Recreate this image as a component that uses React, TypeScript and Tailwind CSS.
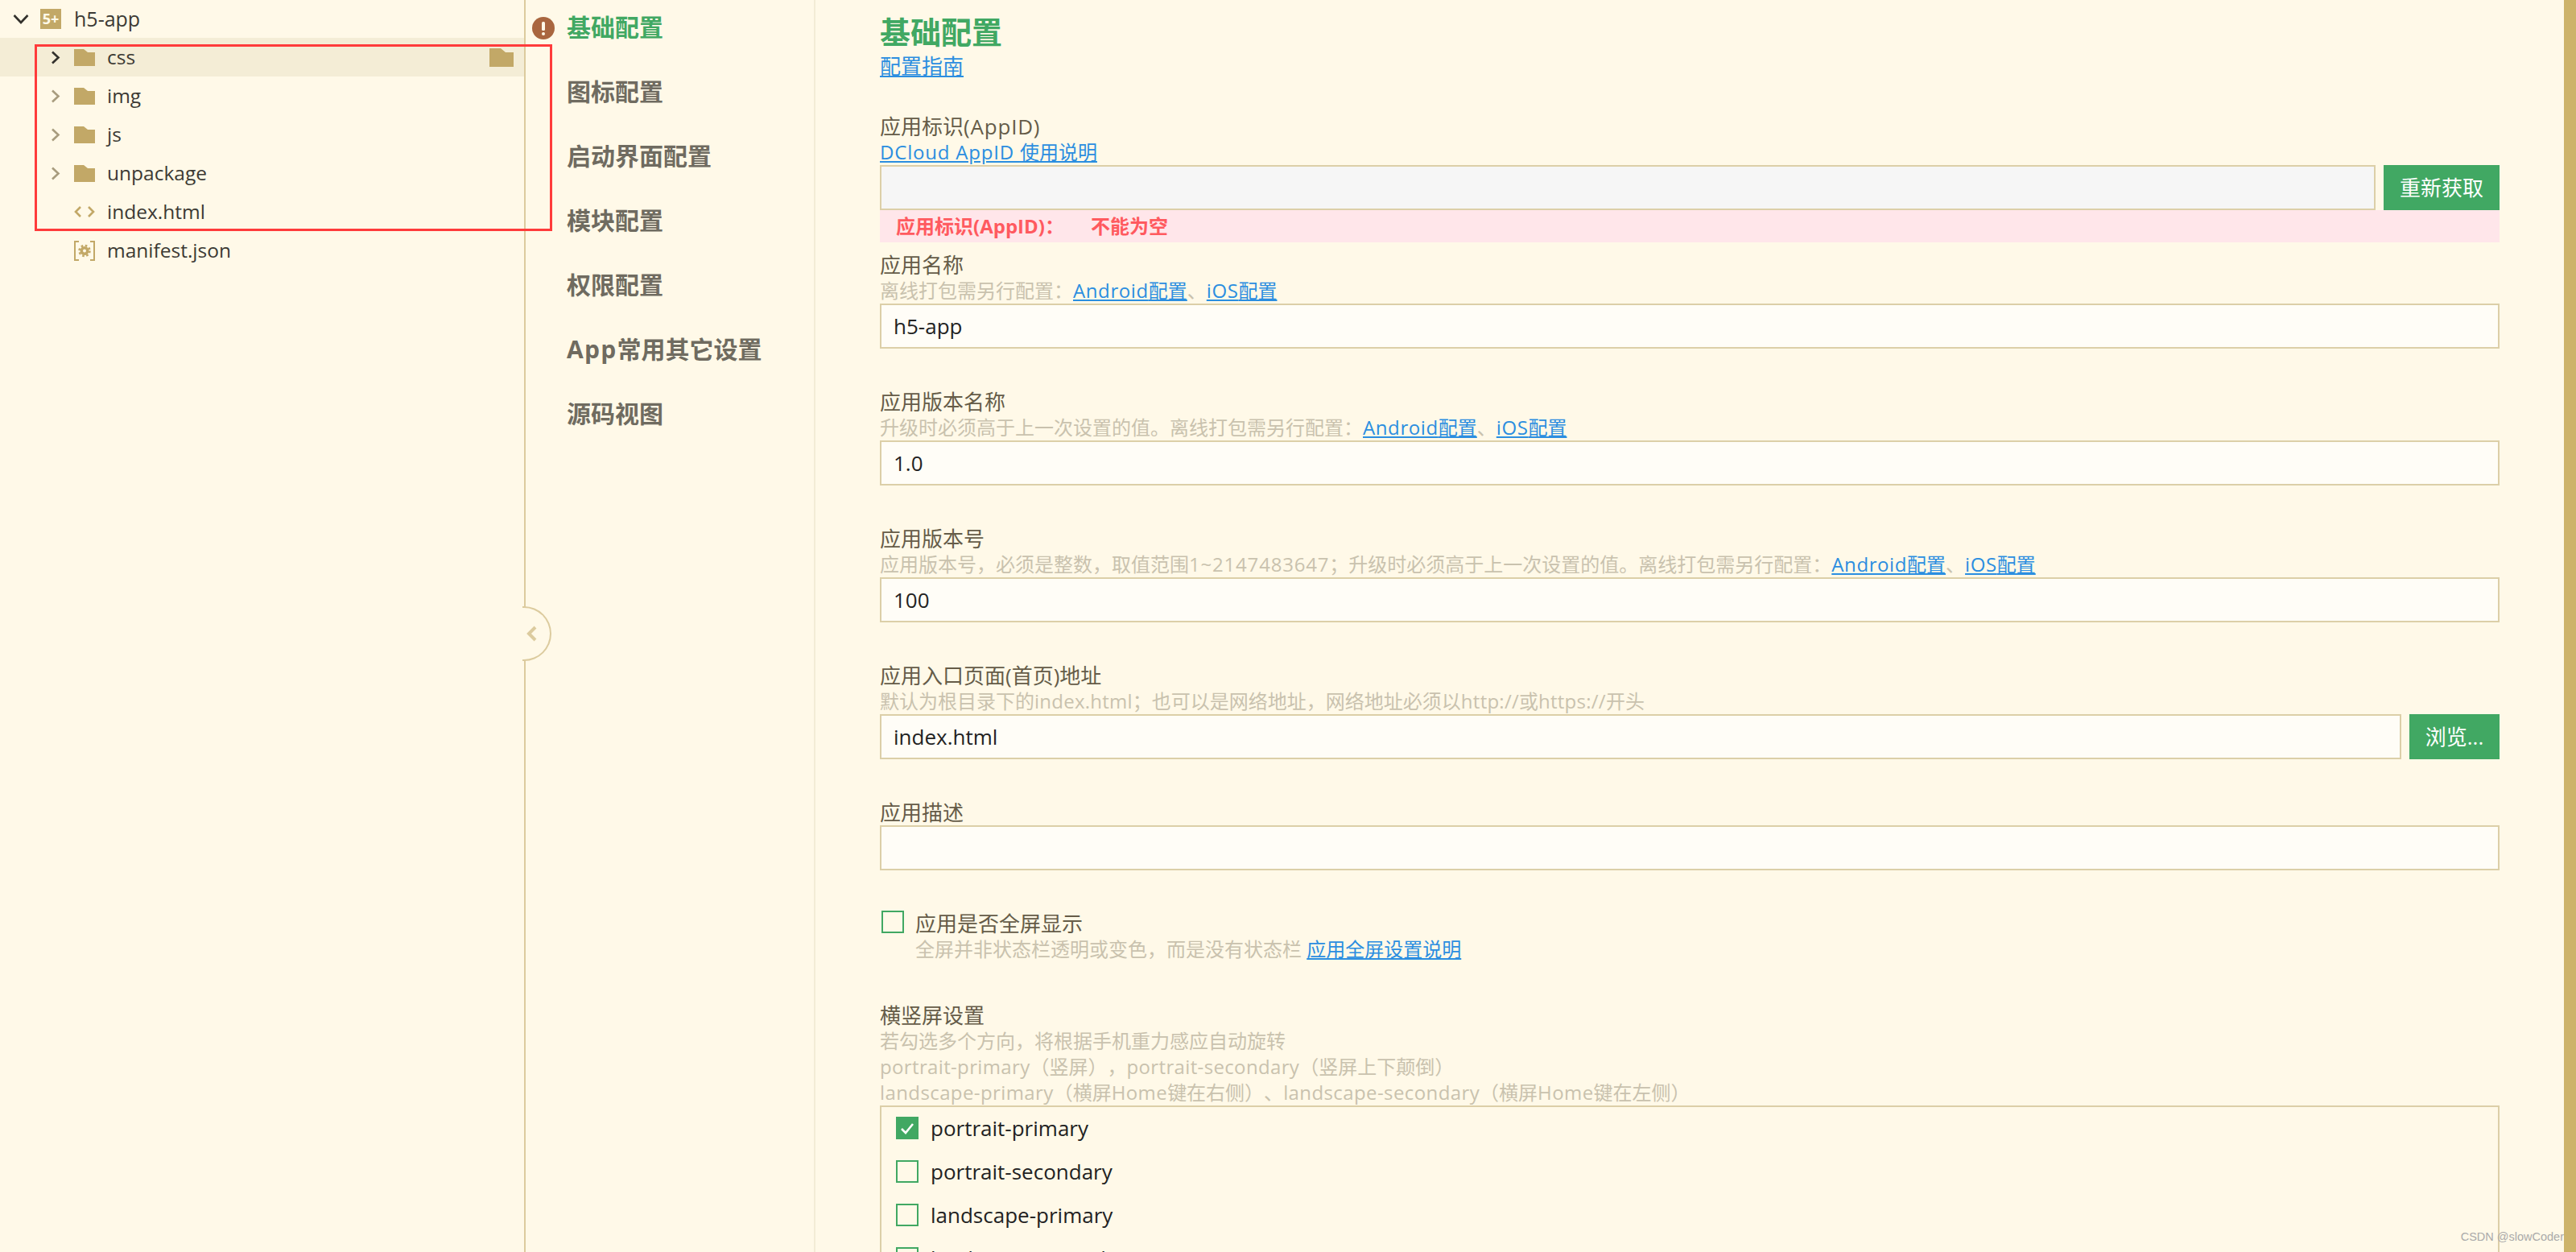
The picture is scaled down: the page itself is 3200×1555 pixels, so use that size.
import type { ReactNode } from "react"

const navItems: ReactNode[] = [
  "基础配置",
  "图标配置",
  "启动界面配置",
  "模块配置",
  "权限配置",
  <><span className="tracking-[1.3px]">App</span>常用其它设置</>,
  "源码视图",
]
const folders = ["css", "img", "js", "unpackage"]
const orientations = [
  { name: "portrait-primary", checked: true },
  { name: "portrait-secondary", checked: false },
  { name: "landscape-primary", checked: false },
  { name: "landscape-secondary", checked: false },
]

function Chevron({ active }: { active?: boolean }) {
  return (
    <svg width="12" height="17" viewBox="0 0 12 17" fill="none" className="shrink-0">
      <path d="M2 1.5 9.5 8.5 2 15.5" stroke={active ? "#33312c" : "#a89c7e"} strokeWidth="2.6" />
    </svg>
  )
}

function FolderIcon({ big }: { big?: boolean }) {
  return big ? (
    <svg width="30" height="23" viewBox="0 0 30 23" className="shrink-0">
      <path d="M0 0H14L20 5H30V23H0Z" fill="#c2a867" />
    </svg>
  ) : (
    <svg width="26" height="21" viewBox="0 0 26 21" className="shrink-0">
      <path d="M0 0H12L17 4H26V21H0Z" fill="#c2a867" />
    </svg>
  )
}

function TreeRow({ icon, children, chevron, active }: { icon: ReactNode; children: ReactNode; chevron?: boolean; active?: boolean }) {
  return (
    <div className={`flex h-12 items-center pl-[63px] ${active ? "bg-[#f4edd6]" : ""}`}>
      <span className="flex w-[29px] shrink-0">{chevron && <Chevron active={active} />}</span>
      <span className="flex w-[41px] shrink-0">{icon}</span>
      <span className="text-[24.5px] text-[#3c3a34]">{children}</span>
    </div>
  )
}

function Sidebar() {
  return (
    <aside className="relative w-[653px] shrink-0 border-r-2 border-[#dccb9e]">
      <div className="flex h-[47px] items-center pl-4">
        <svg width="20" height="14" viewBox="0 0 20 14" fill="none" className="shrink-0">
          <path d="M1.5 2 10 11 18.5 2" stroke="#33312c" strokeWidth="2.6" />
        </svg>
        <span className="ml-[14px] flex h-[25px] w-[26px] shrink-0 items-center justify-center bg-[#c2a867] text-[18px] font-bold text-[#fff9e8]">5+</span>
        <span className="ml-4 text-[25px] text-[#3c3a34]">h5-app</span>
      </div>
      {folders.map((name, i) => (
        <div key={name} className="relative">
          <TreeRow chevron active={i === 0} icon={<FolderIcon />}>{name}</TreeRow>
          {i === 0 && (
            <span className="absolute right-[13px] top-[13px] flex">
              <FolderIcon big />
            </span>
          )}
        </div>
      ))}
      <TreeRow
        icon={
          <svg width="26" height="14" viewBox="0 0 26 14" fill="none">
            <path d="M8 1 2 7 8 13M18 1 24 7 18 13" stroke="#c2a867" strokeWidth="2.6" />
          </svg>
        }
      >
        index.html
      </TreeRow>
      <TreeRow
        icon={
          <svg width="26" height="25" viewBox="0 0 26 25" fill="none">
            <path d="M6 1H1V24H6M20 1H25V24H20" stroke="#c2a867" strokeWidth="2" />
            <circle cx="13" cy="12.5" r="6.5" stroke="#c2a867" strokeWidth="2.5" strokeDasharray="2.6 2.5" />
            <circle cx="13" cy="12.5" r="5.5" fill="#c2a867" />
            <circle cx="13" cy="12.5" r="2" fill="#fff9e8" />
          </svg>
        }
      >
        manifest.json
      </TreeRow>
      {/* collapse handle sitting on the divider */}
      <div className="absolute left-[649px] top-[753px] flex h-[68px] w-[36px] items-center justify-start rounded-r-full border-2 border-l-0 border-[#dccb9e] bg-[#fff9e8] pl-[5px]">
        <svg width="14" height="20" viewBox="0 0 14 20" fill="none">
          <path d="M11 2 3 10 11 18" stroke="#dccb9e" strokeWidth="4" />
        </svg>
      </div>
    </aside>
  )
}

function Nav() {
  return (
    <nav className="w-[360px] shrink-0 border-r-2 border-[#f3ecd6]">
      <div className="-mt-[7px]">
        {navItems.map((item, i) => (
          <div key={i} className={`flex h-20 items-center text-[30px] font-bold ${i === 0 ? "pl-2 text-[#41a863]" : "pl-[51px] text-[#6f6b60]"}`}>
            {i === 0 && (
              <svg width="28" height="28" viewBox="0 0 28 28" className="mr-[15px] mt-[4px] shrink-0">
                <circle cx="14" cy="14" r="14" fill="#a9663f" />
                <rect x="12" y="6" width="4" height="11" rx="1.5" fill="#fff9e8" />
                <rect x="12" y="19" width="4" height="4" rx="2" fill="#fff9e8" />
              </svg>
            )}
            <span>{item}</span>
          </div>
        ))}
      </div>
    </nav>
  )
}

function Link({ children }: { children: ReactNode }) {
  return <a className="text-[#2b8ee0] underline underline-offset-2">{children}</a>
}

function Latin({ children, w = "tracking-[0.6px]" }: { children: ReactNode; w?: string }) {
  return <span className={w}>{children}</span>
}

function Label({ children }: { children: ReactNode }) {
  return <div className="h-8 text-[26px] leading-8 text-[#655c48]">{children}</div>
}

function Help({ children }: { children: ReactNode }) {
  return <div className="h-8 whitespace-nowrap text-[24px] leading-8 text-[#c9c2ae]">{children}</div>
}

function Input({ value, disabled, className = "" }: { value?: string; disabled?: boolean; className?: string }) {
  return (
    <div className={`flex h-14 items-center border-2 border-[#dccfa8] pl-[15px] text-[26px] text-[#222] ${disabled ? "bg-[#f6f6f6]" : "bg-[#fffdf7]"} ${className}`}>
      {value}
    </div>
  )
}

function Button({ children, className = "" }: { children: ReactNode; className?: string }) {
  return <div className={`flex h-14 shrink-0 items-center justify-center bg-[#41a863] text-[26px] text-white ${className}`}>{children}</div>
}

function Checkbox({ checked }: { checked?: boolean }) {
  return (
    <span className={`flex size-7 shrink-0 items-center justify-center border-2 border-[#41a863] ${checked ? "bg-[#41a863]" : ""}`}>
      {checked && (
        <svg width="18" height="15" viewBox="0 0 18 15" fill="none">
          <path d="M2 8 7 13 16 2" stroke="#fff" strokeWidth="2.6" />
        </svg>
      )}
    </span>
  )
}

const androidIos = (
  <>
    <Link><Latin>Android</Latin>配置</Link>、<Link><Latin>iOS</Latin>配置</Link>
  </>
)

function Main() {
  return (
    <main className="min-w-0 flex-1 px-20 pt-4">
      <h1 className="h-[46px] text-[38px] font-bold leading-[46px] text-[#41a863]">基础配置</h1>
      <div className="mt-1 text-[26px] leading-8"><Link>配置指南</Link></div>

      <div className="mt-[43px]">
        <Label>应用标识<Latin w="tracking-[0.8px]">(AppID)</Latin></Label>
        <div className="h-8 text-[24px] leading-8"><Link><Latin w="tracking-[0.8px]">DCloud AppID </Latin>使用说明</Link></div>
        <div className="flex gap-[10px]">
          <Input disabled className="flex-1" />
          <Button className="w-[144px]">重新获取</Button>
        </div>
        <div className="flex h-10 items-center bg-[#ffe6ea] pl-5 text-[24px] font-bold text-[#ff5a5f]">
          <span className="w-[242px]">应用标识(AppID)：</span>
          <span>不能为空</span>
        </div>
      </div>

      <div className="mt-3">
        <Label>应用名称</Label>
        <Help>离线打包需另行配置：{androidIos}</Help>
        <Input value="h5-app" />
      </div>

      <div className="mt-[50px]">
        <Label>应用版本名称</Label>
        <Help>升级时必须高于上一次设置的值。离线打包需另行配置：{androidIos}</Help>
        <Input value="1.0" />
      </div>

      <div className="mt-[50px]">
        <Label>应用版本号</Label>
        <Help>应用版本号，必须是整数，取值范围<Latin w="tracking-[0.8px]">1~2147483647</Latin>；升级时必须高于上一次设置的值。离线打包需另行配置：{androidIos}</Help>
        <Input value="100" />
      </div>

      <div className="mt-[50px]">
        <Label>应用入口页面(首页)地址</Label>
        <Help>默认为根目录下的<Latin w="tracking-[0.25px]">index.html</Latin>；也可以是网络地址，网络地址必须以<Latin w="tracking-[0.25px]">http://</Latin>或<Latin w="tracking-[0.25px]">https://</Latin>开头</Help>
        <div className="flex gap-[10px]">
          <Input value="index.html" className="flex-1" />
          <Button className="w-[112px]">浏览...</Button>
        </div>
      </div>

      <div className="mt-[50px]">
        <Label>应用描述</Label>
        <Input />
      </div>

      <div className="ml-[2px] mt-[50px] flex gap-[14px]">
        <Checkbox />
        <div>
          <Label>应用是否全屏显示</Label>
          <Help>全屏并非状态栏透明或变色，而是没有状态栏 <Link>应用全屏设置说明</Link></Help>
        </div>
      </div>

      <div className="mt-[50px]">
        <Label>横竖屏设置</Label>
        <Help>若勾选多个方向，将根据手机重力感应自动旋转</Help>
        <Help>
          <Latin w="tracking-[0.35px]">portrait-primary</Latin>（竖屏），<Latin w="tracking-[0.35px]">portrait-secondary</Latin>（竖屏上下颠倒）
        </Help>
        <Help>
          <Latin w="tracking-[0.4px]">landscape-primary</Latin>（横屏<Latin w="tracking-[0.4px]">Home</Latin>键在右侧）、<Latin w="tracking-[0.4px]">landscape-secondary</Latin>（横屏<Latin w="tracking-[0.4px]">Home</Latin>键在左侧）
        </Help>
        <div className="flex flex-col gap-[26px] border-2 border-[#dccfa8] px-[18px] pb-5 pt-3">
          {orientations.map((o) => (
            <div key={o.name} className="flex h-7 items-center gap-[15px] text-[26px] text-[#222]">
              <Checkbox checked={o.checked} />
              {o.name}
            </div>
          ))}
        </div>
      </div>
    </main>
  )
}

export default function App() {
  return (
    <div className="relative flex h-[1555px] w-[3200px] overflow-hidden bg-[#fff9e8] font-['Open_Sans','Noto_Sans_CJK_SC',sans-serif] [text-spacing-trim:space-all]">
      <Sidebar />
      <Nav />
      <Main />
      <div className="w-[15px] shrink-0 bg-[#cdb36a]" />
      {/* red annotation box drawn over the screenshot */}
      <div className="absolute left-[43px] top-[55px] h-[232px] w-[643px] border-[3px] border-[#ff3b3b]" />
      <div className="absolute bottom-[7px] right-[15px] font-['Liberation_Sans',sans-serif] text-[14.5px] text-[#aaa]">CSDN @slowCoder</div>
    </div>
  )
}
